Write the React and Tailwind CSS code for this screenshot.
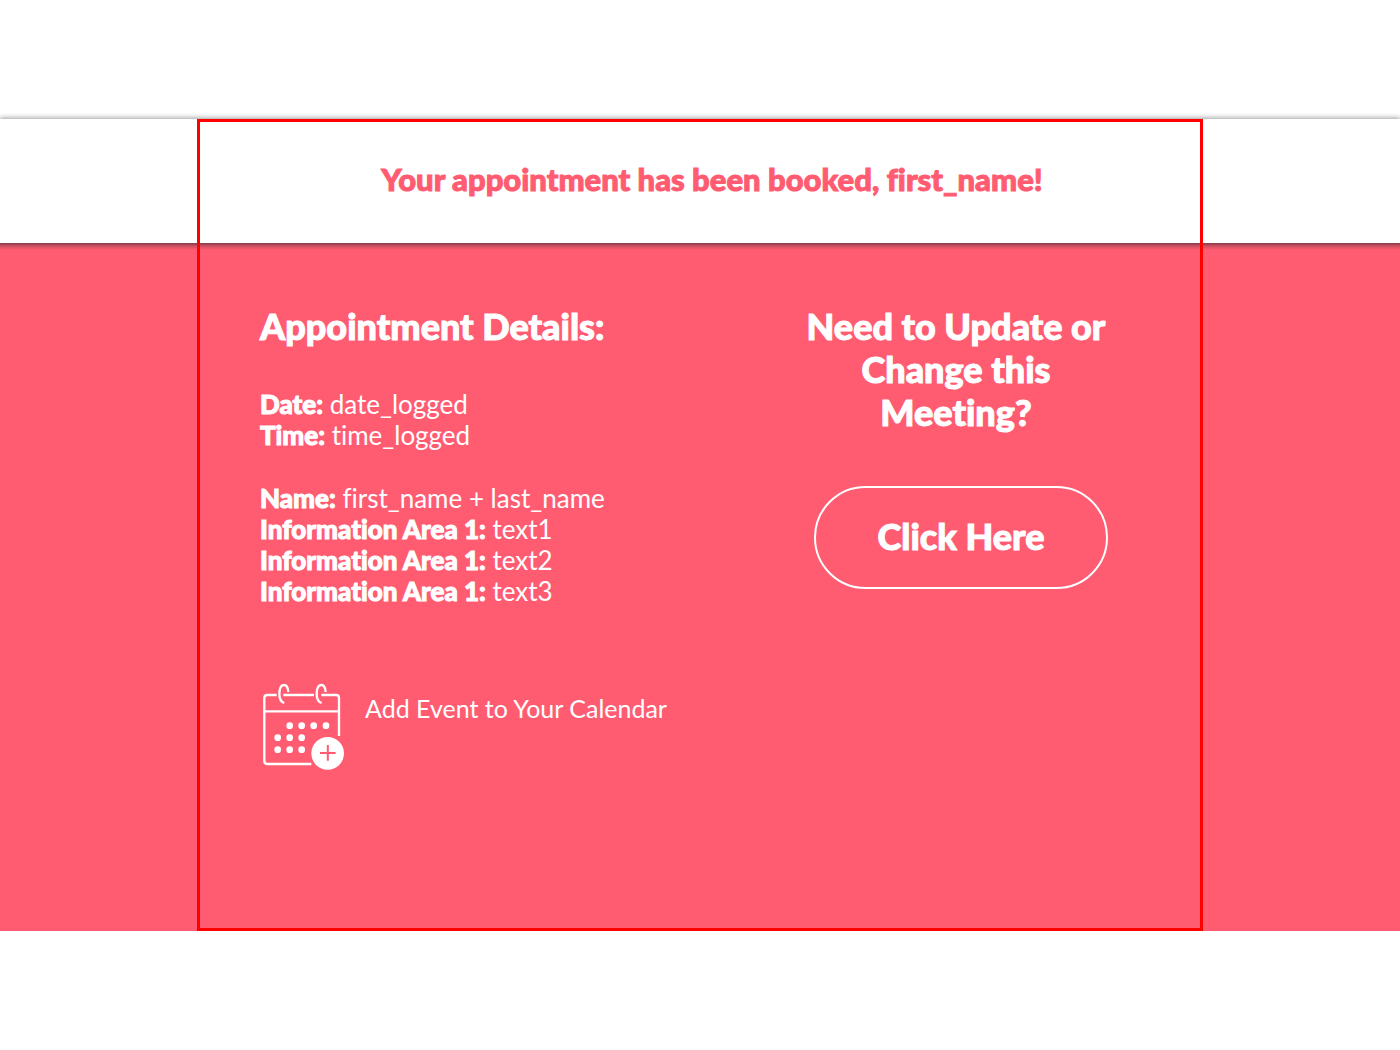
const schedule = [
  { label: 'Date', value: 'date_logged' },
  { label: 'Time', value: 'time_logged' },
];

const attendee = [
  { label: 'Name', value: 'first_name + last_name' },
  { label: 'Information Area 1', value: 'text1' },
  { label: 'Information Area 1', value: 'text2' },
  { label: 'Information Area 1', value: 'text3' },
];

const dots = [
  [119, 152], [155, 152], [191, 152], [228, 152],
  [83, 188], [119, 188], [155, 188],
  [83, 224], [119, 224], [155, 224],
];

function CalendarIcon() {
  return (
    <svg
      viewBox="36 24 249 264"
      className="h-[88px] w-[83px] shrink-0"
      fill="none"
      stroke="white"
      strokeWidth="7"
      aria-hidden="true"
    >
      <path d="M80 60H52q-9 0-9 9v189q0 9 9 9h132" />
      <path d="M100 60h92M214 60h44q9 0 9 9v114" />
      <path d="M43 109h224" />
      <path d="M115 51C114 38 110 30 102 30C93 30 88 42 88 56C88 71 94 81 103 84" />
      <path d="M227 51C226 38 222 30 214 30C205 30 200 42 200 56C200 71 206 81 215 84" />
      {dots.map(([x, y]) => (
        <circle key={`${x}-${y}`} cx={x} cy={y} r="10" fill="white" stroke="none" />
      ))}
      <circle cx="233" cy="235" r="49" fill="white" stroke="none" />
      <path d="M210 234h47M233.500 210v47" stroke="#ff5c72" strokeWidth="6" />
    </svg>
  );
}

function Details({ items }) {
  return (
    <dl>
      {items.map(({ label, value }, i) => (
        <div key={i}>
          <dt className="inline font-black [-webkit-text-stroke:1px]">{label}:</dt>{' '}
          <dd className="inline">{value}</dd>
        </div>
      ))}
    </dl>
  );
}

export default function App() {
  return (
    <div className="min-h-screen bg-white pt-[119px] font-['Lato',sans-serif] [font-variant-ligatures:none]">
      <header className="bg-white px-4 shadow-[0_-1px_5px_rgba(0,0,0,0.4)]">
        <div className="mx-auto max-w-[1006px] border-x-3 border-t-3 border-[#ff0000] pt-[39px] pb-[45px] pl-6">
          <h1 className="text-center text-[31px] leading-[37px] font-black text-[#ff5c72] [-webkit-text-stroke:1px]">
            Your appointment has been booked, first_name!
          </h1>
        </div>
      </header>

      <main className="bg-[#ff5c72] bg-[linear-gradient(to_bottom,rgba(60,40,50,0.65),rgba(60,40,50,0.25)_3px,transparent_7px)] px-4 text-white">
        <div className="mx-auto flex max-w-[1006px] justify-between border-x-3 border-b-3 border-[#ff0000] pt-[62px] pr-[92px] pb-[157px] pl-[60px]">
          <section className="text-[26px] leading-[31px]">
            <h2 className="text-[36px] leading-[43px] font-black [-webkit-text-stroke:1px]">
              Appointment Details:
            </h2>
            <div className="mt-[41px] flex flex-col gap-8">
              <Details items={schedule} />
              <Details items={attendee} />
            </div>
            <button type="button" className="mt-[76px] flex items-start gap-5 pl-0.5">
              <CalendarIcon />
              <span className="pt-[10px] text-[25px]">Add Event to Your Calendar</span>
            </button>
          </section>

          <section className="flex w-[304px] flex-col items-end text-[36px] leading-[43px] font-black [-webkit-text-stroke:1px]">
            <h2 className="self-center text-center whitespace-nowrap">
              Need to Update or
              <br />
              Change this
              <br />
              Meeting?
            </h2>
            <button
              type="button"
              className="mt-[52px] w-[294px] rounded-full border-2 border-white pt-[27px] pb-[29px]"
            >
              Click Here
            </button>
          </section>
        </div>
      </main>
    </div>
  );
}
